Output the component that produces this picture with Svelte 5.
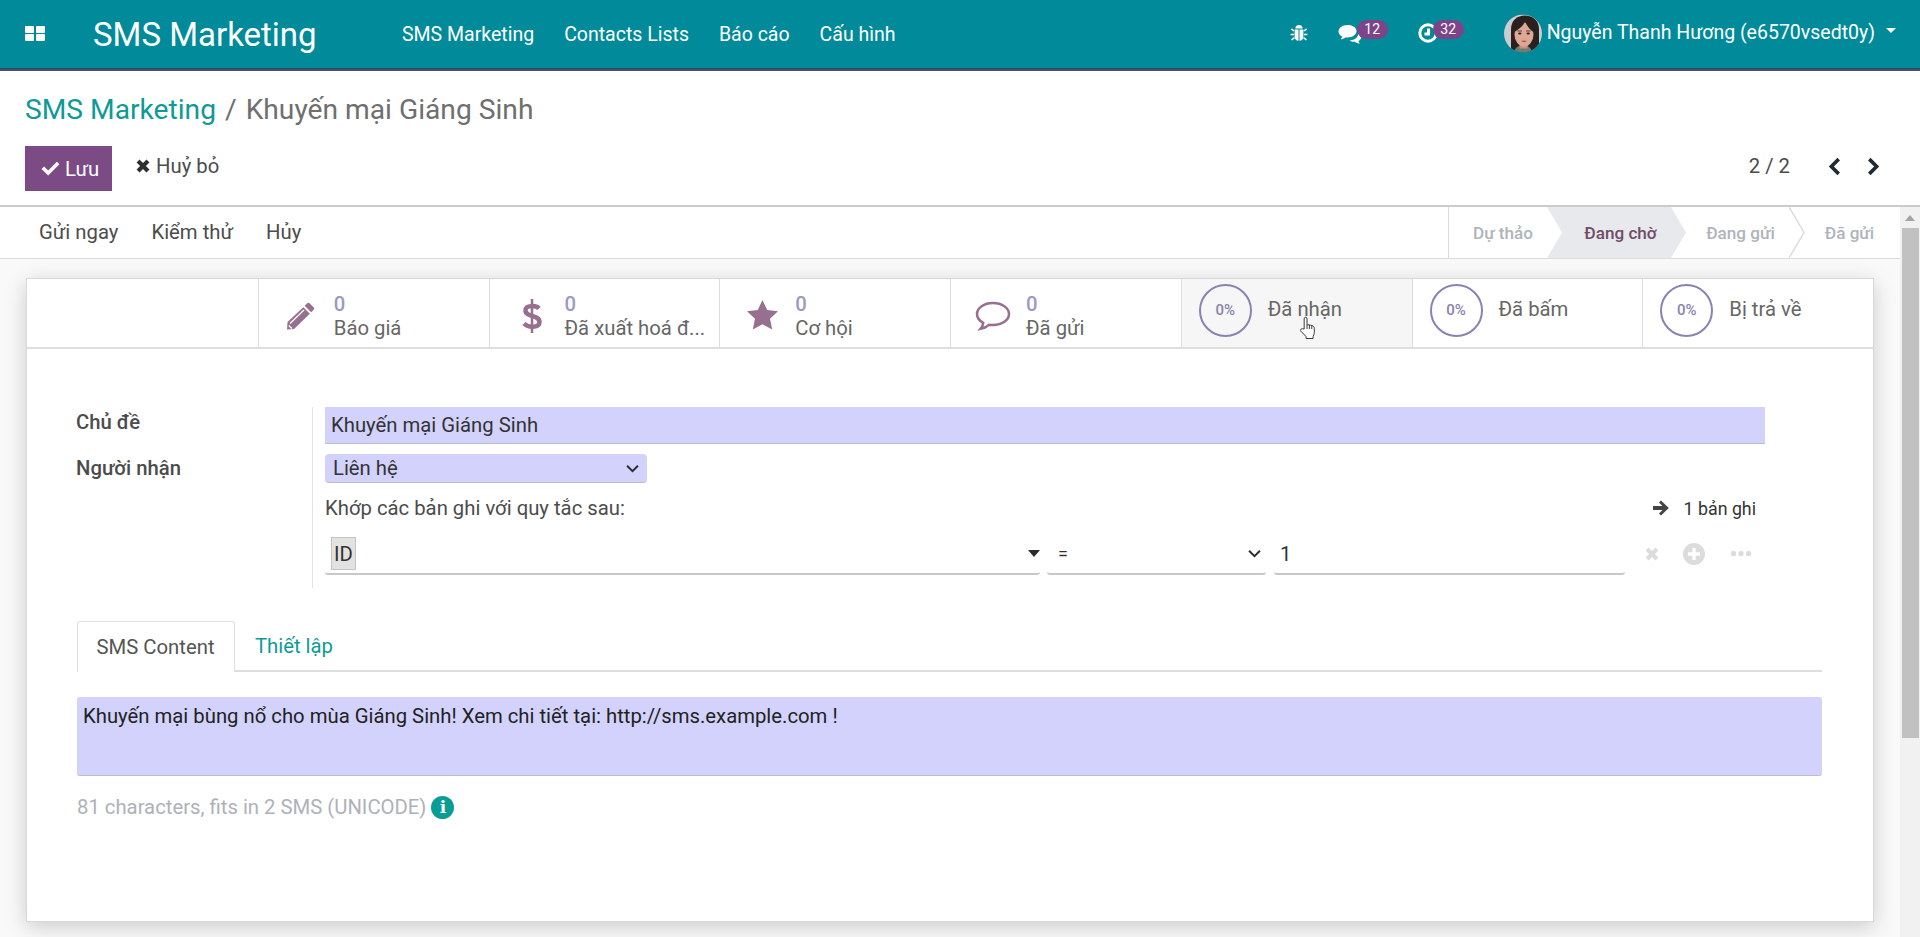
<script>
	const navLinks = ['SMS Marketing', 'Contacts Lists', 'Báo cáo', 'Cấu hình']
	const actions = ['Gửi ngay', 'Kiểm thử', 'Hủy']
	const steps = [
		{ label: 'Dự thảo', width: 98, pad: 10 },
		{ label: 'Đang chờ', width: 139, pad: 8, active: true },
		{ label: 'Đang gửi', width: 119, pad: 20 },
		{ label: 'Đã gửi', width: 110, pad: 9 }
	]
	const counters = [
		{ icon: 'pencil', label: 'Báo giá' },
		{ icon: 'dollar', label: 'Đã xuất hoá đ...' },
		{ icon: 'star', label: 'Cơ hội' },
		{ icon: 'comment', label: 'Đã gửi' }
	]
	const rates = [{ label: 'Đã nhận', hover: true }, { label: 'Đã bấm' }, { label: 'Bị trả về' }]
</script>

<div class="page">
	<header class="navbar">
		<svg class="apps" viewBox="0 0 20 15" aria-hidden="true">
			<rect x="0" y="0" width="9" height="7" rx="1" />
			<rect x="11" y="0" width="9" height="7" rx="1" />
			<rect x="0" y="8" width="9" height="7" rx="1" />
			<rect x="11" y="8" width="9" height="7" rx="1" />
		</svg>
		<span class="brand">SMS Marketing</span>
		<nav class="menu">
			{#each navLinks as link}
				<span>{link}</span>
			{/each}
		</nav>
		<div class="systray">
			<svg class="bug" viewBox="0 0 18 18" aria-hidden="true">
				<path d="M5.4 4.6a3.6 3.6 0 0 1 7.2 0z" />
				<path d="M4.6 5.6h3.9v11.2C6 16.6 4.6 15 4.6 12.5zM9.5 5.6h3.9v6.9c0 2.5-1.4 4.1-3.9 4.3z" />
				<path class="legs" d="M4 7 1.4 4.8M14 7l2.6-2.2M4 10.5H.6M14 10.5h3.4M4.4 13.6 1.6 16M13.6 13.6l2.8 2.4" />
			</svg>
			<span class="tray-item tray-chat">
				<svg class="chat" viewBox="0 0 24 20" aria-hidden="true">
					<path d="M9.5 1C4.5 1 .5 3.900.5 7.500c0 2.200 1.500 4.100 3.800 5.300-.3 1-.9 1.800-1.700 2.500 1.800-.2 3.400-.9 4.700-1.900.7.100 1.400.2 2.200.2 5 0 9-2.900 9-6.500S14.500 1 9.500 1z" />
					<path d="M20.400 9.500c.1 3.700-3.900 6.700-9 7 1.500 1 3.500 1.400 5.400 1.200 1.300 1 3 1.700 5.200 1.900-.8-.7-1.300-1.500-1.600-2.400 1.800-1 2.900-2.500 2.900-4.100 0-1.500-1.100-2.900-2.900-3.600z" />
				</svg>
				<span class="badge">12</span>
			</span>
			<span class="tray-item tray-clock">
				<svg class="clock" viewBox="0 0 20 20" aria-hidden="true">
					<circle cx="10" cy="10" r="8.200" />
					<path d="M10.500 5.500v5.500H6.500" />
				</svg>
				<span class="badge">32</span>
			</span>
			<svg class="avatar" viewBox="0 0 38 38" aria-hidden="true">
				<clipPath id="avatar-clip"><circle cx="19" cy="19" r="19" /></clipPath>
				<g clip-path="url(#avatar-clip)">
					<rect width="38" height="38" fill="#c8cdd2" />
					<path d="M7 38V15C7 6 13 1 21 1s14 5 14 14v23z" fill="#2a211f" />
					<path d="M10 38c1-6 5-7 9-7s8 1 9 7z" fill="#6d7d78" />
					<path d="M15.500 27h8v7h-8z" fill="#c8917c" />
					<ellipse cx="20" cy="20" rx="9.500" ry="12" fill="#dda996" />
					<path d="M10 18C14 15 19 12 21 7c2 5 6 9 9 11l1-7-7-6h-8l-6 6z" fill="#2a211f" />
					<ellipse cx="15.800" cy="19" rx="1.700" ry=".9" fill="#2a1c1a" />
					<ellipse cx="24.200" cy="19" rx="1.700" ry=".9" fill="#2a1c1a" />
					<path d="M13.500 16.500h4.500M22 16.500h4.500" stroke="#3a2a26" stroke-width=".8" />
					<path d="M17 26.600c2-.8 4-.8 6 0-2 1.400-4 1.400-6 0z" fill="#b4524e" />
				</g>
			</svg>
			<span class="user">Nguyễn Thanh Hương (e6570vsedt0y)</span>
			<span class="caret"></span>
		</div>
	</header>

	<section class="control-panel">
		<h1 class="breadcrumb">
			<span class="crumb-link">SMS Marketing</span>
			<span class="crumb-sep">/</span>
			<span>Khuyến mại Giáng Sinh</span>
		</h1>
		<div class="cp-row">
			<button class="save">
				<svg viewBox="0 0 18 14" aria-hidden="true"><path d="M.5 7.500 3 5l3.800 3.800L15 .5l2.500 2.500L6.800 13.700z" /></svg>
				Lưu
			</button>
			<button class="discard">
				<svg viewBox="0 0 12 12" aria-hidden="true"><path d="M3 .5 6 3.500 9 .5 11.500 3 8.500 6l3 3L9 11.500l-3-3-3 3L.5 9l3-3-3-3z" /></svg>
				Huỷ bỏ
			</button>
			<div class="pager">
				<span>2 / 2</span>
				<svg class="pager-prev" viewBox="0 0 12 18" aria-hidden="true"><path d="M10 2 3 9l7 7" /></svg>
				<svg class="pager-next" viewBox="0 0 12 18" aria-hidden="true"><path d="M2 2l7 7-7 7" /></svg>
			</div>
		</div>
	</section>

	<div class="workspace">
		<main class="content">
			<div class="statusbar">
				<div class="actions">
					{#each actions as action}
						<span>{action}</span>
					{/each}
				</div>
				<div class="steps">
					{#each steps as step, i}
						<div class="step" class:active={step.active} style="width: {step.width}px; padding-left: {step.pad}px">
							<span>{step.label}</span>
							{#if i === steps.length - 1}
								<svg class="chevron" viewBox="0 0 16 52" preserveAspectRatio="none" aria-hidden="true"><path d="M0 0 15 26 0 52" /></svg>
							{/if}
						</div>
					{/each}
				</div>
			</div>

			<div class="sheet">
				<div class="button-box">
					<div class="stat stat-empty"></div>
					{#each counters as c}
						<div class="stat">
							<span class="stat-icon">
								{#if c.icon === 'pencil'}
									<svg class="i-pencil" viewBox="0 0 29 29" aria-hidden="true">
										<path d="M21 2.500a2 2 0 0 1 2.800 0l3.700 3.700a2 2 0 0 1 0 2.800l-2.300 2.300-6.500-6.500z" />
										<path d="M17.300 6.200l6.500 6.500L8 28 1 28.500 1.500 21z" />
										<path class="cut" d="M4 22.500 18 9M2.800 24.500l3 3" />
									</svg>
								{:else if c.icon === 'dollar'}
									<svg class="i-dollar" viewBox="0 0 22 36" aria-hidden="true">
										<path class="stroke" d="M18 10.500C15.500 7.500 4.500 6.500 4.500 12.500 4.500 19.500 18.500 16.500 18.500 24c0 6-11 6-15.500 1.500" />
										<path class="stroke thin" d="M11 1v34" />
									</svg>
								{:else if c.icon === 'star'}
									<svg class="i-star" viewBox="0 0 32 32" aria-hidden="true"><path d="M16 1l4.700 10 10.800 1.300-8 7.400 2.200 10.800L16 25.200 6.300 30.500l2.200-10.800-8-7.400L11.300 11z" /></svg>
								{:else}
									<svg class="i-comment" viewBox="0 0 36 30" aria-hidden="true"><path class="stroke thin" d="M18 2C9 2 2 6.800 2 13c0 3.600 2.400 6.800 6.200 8.800-.3 2.400-1.200 4.300-2.700 6 3.400-.6 6.300-2 8.500-4 1.300.2 2.600.3 4 .3 9 0 16-5 16-11.100S27 2 18 2z" /></svg>
								{/if}
							</span>
							<span class="stat-text">
								<b>0</b>
								<span>{c.label}</span>
							</span>
						</div>
					{/each}
					{#each rates as r}
						<div class="stat rate" class:hover={r.hover}>
							<span class="ring">0%</span>
							<span class="rate-label">{r.label}</span>
							{#if r.hover}
								<svg class="hand" viewBox="0 0 20 24" preserveAspectRatio="none" aria-hidden="true">
									<path d="M6.500 13V2.800a1.500 1.500 0 0 1 3 0V9l1.200-.3 1.300.2 1.200.3 1.300.3c1.700.4 2.700 1.400 2.700 3.200v3.600c0 1.600-.5 2.800-1.300 4.200V22.500H8.500v-2L3.300 15.500c-1.600-1.600.5-3.800 2-2.500z" />
									<path d="M9.500 9v4M12 9v4M14.500 9.500V13" />
								</svg>
							{/if}
						</div>
					{/each}
				</div>

				<div class="form">
					<div class="group">
						<div class="labels">
							<span class="field-label">Chủ đề</span>
							<span class="field-label">Người nhận</span>
						</div>
						<div class="group-body">
							<div class="input-line">Khuyến mại Giáng Sinh</div>
							<div class="select-short">
								<span>Liên hệ</span>
								<svg class="select-arrow" viewBox="0 0 12 8" aria-hidden="true"><path d="M1 1.500 6 6.500l5-5" /></svg>
							</div>
							<div class="domain-head">
								<span>Khớp các bản ghi với quy tắc sau:</span>
								<span class="records">
									<svg viewBox="0 0 18 18" aria-hidden="true"><path d="M9 1.500 16.800 9 9 16.500 7 14.500 10.500 11H1V7h9.500L7 3.500z" /></svg>
									1 bản ghi
								</span>
							</div>
							<div class="domain-leaf">
								<div class="leaf-field leaf-path">
									<span class="chip">ID</span>
									<span class="tri"></span>
								</div>
								<div class="leaf-field leaf-op">
									<span class="op">=</span>
									<svg class="select-arrow" viewBox="0 0 12 8" aria-hidden="true"><path d="M1 1.500 6 6.500l5-5" /></svg>
								</div>
								<div class="leaf-field leaf-value">1</div>
								<div class="leaf-tools">
									<svg class="tool-x" viewBox="0 0 12 12" aria-hidden="true"><path d="M3 .5 6 3.500 9 .5 11.500 3 8.500 6l3 3L9 11.500l-3-3-3 3L.5 9l3-3-3-3z" /></svg>
									<svg class="tool-plus" viewBox="0 0 20 20" aria-hidden="true"><path fill-rule="evenodd" d="M10 0a10 10 0 1 0 0 20 10 10 0 0 0 0-20zM8.500 4.500h3v4h4v3h-4v4h-3v-4h-4v-3h4z" /></svg>
									<svg class="tool-more" viewBox="0 0 20 6" aria-hidden="true"><rect y=".5" width="5" height="5" rx="1.500" /><rect x="7.500" y=".5" width="5" height="5" rx="1.500" /><rect x="15" y=".5" width="5" height="5" rx="1.500" /></svg>
								</div>
							</div>
						</div>
					</div>

					<div class="tabs">
						<span class="tab active">SMS Content</span>
						<span class="tab">Thiết lập</span>
					</div>
					<div class="sms-body">Khuyến mại bùng nổ cho mùa Giáng Sinh! Xem chi tiết tại: http://sms.example.com !</div>
					<div class="sms-count">
						81 characters, fits in 2 SMS (UNICODE)
						<span class="info">i</span>
					</div>
				</div>
			</div>
		</main>

		<div class="scrollbar">
			<span class="scroll-up"></span>
			<span class="scroll-thumb"></span>
		</div>
	</div>
</div>

<style>
	:global(body) {
		margin: 0;
		background: #f9f9f9;
		font-family: Roboto, 'Noto Sans', sans-serif;
		overflow: hidden;
	}

	.page {
		height: 937px;
		display: flex;
		flex-direction: column;
		overflow: hidden;
		color: #4c4c4c;
		font-size: 20.3px;
	}

	.navbar {
		height: 69px;
		flex: none;
		box-sizing: content-box;
		display: flex;
		align-items: center;
		background: #008a9a;
		color: #fff;
		font-size: 19.5px;
		border-bottom: 2px solid #5a4765;
		box-shadow: inset 0 -1px 0 #0b5560;
	}

	.apps {
		width: 20px;
		height: 15px;
		margin-left: 25px;
		margin-top: -3px;
		fill: #fff;
	}

	.brand {
		font-size: 33px;
		margin-left: 48px;
		width: 223px;
		white-space: nowrap;
	}

	.menu {
		display: flex;
		gap: 30px;
		margin-left: 86px;
	}

	.systray {
		margin-left: auto;
		display: flex;
		align-items: center;
		margin-top: -5px;
	}

	.bug {
		width: 18px;
		height: 18px;
		fill: #fff;
		margin-top: 2px;
	}

	.legs {
		fill: none;
		stroke: #fff;
		stroke-width: 1.6;
	}

	.tray-item {
		display: flex;
		align-items: flex-start;
	}

	.tray-chat {
		margin-left: 30px;
	}

	.chat {
		width: 24px;
		height: 20px;
		fill: #fff;
		margin-top: 3px;
	}

	.tray-clock {
		margin-left: 30px;
	}

	.clock {
		width: 20px;
		height: 20px;
		margin-top: 2px;
		fill: none;
		stroke: #fff;
		stroke-width: 3;
	}

	.badge {
		width: 31px;
		height: 19px;
		margin-left: -5px;
		margin-top: -1px;
		border-radius: 10px;
		background: #7e4489;
		font-size: 14px;
		line-height: 19px;
		text-align: center;
	}

	.avatar {
		width: 38px;
		height: 39px;
		margin-left: 40px;
		margin-top: 2px;
	}

	.user {
		margin-left: 5px;
		white-space: nowrap;
	}

	.caret {
		width: 0;
		height: 0;
		margin: -4px 24px 0 11px;
		border-left: 5.5px solid transparent;
		border-right: 5.5px solid transparent;
		border-top: 5.5px solid #fff;
	}

	.control-panel {
		flex: none;
		height: 136px;
		padding: 20px 25px 0;
		box-sizing: border-box;
		background: #fff;
		border-bottom: 2px solid #cbcbcb;
	}

	.breadcrumb {
		margin: 0;
		height: 38px;
		line-height: 38px;
		font-size: 28.2px;
		font-weight: 400;
		color: #6f6f6f;
		display: flex;
		gap: 9px;
		white-space: nowrap;
	}

	.crumb-link {
		color: #0e9a96;
	}

	.cp-row {
		display: flex;
		align-items: center;
		margin-top: 17px;
		height: 45px;
	}

	button {
		font: inherit;
		border: 0;
		cursor: pointer;
	}

	.save {
		width: 87px;
		height: 45px;
		padding: 0 0 0 16px;
		display: flex;
		align-items: center;
		gap: 5px;
		background: #7c4a85;
		color: #fff;
	}

	.save svg {
		width: 19px;
		height: 15px;
		fill: #fff;
	}

	.discard {
		margin-left: 24px;
		padding: 0;
		background: none;
		color: #4c4c4c;
		display: flex;
		align-items: center;
		gap: 6px;
		margin-top: -5px;
	}

	.discard svg {
		width: 14px;
		height: 14px;
		fill: #2f2f2f;
	}

	.pager {
		margin-left: auto;
		display: flex;
		align-items: center;
		margin-right: 15px;
		margin-top: -5px;
	}

	.pager svg {
		width: 13px;
		height: 19px;
		fill: none;
		stroke: #1f2a33;
		stroke-width: 3.400;
	}

	.pager-prev {
		margin-left: 38px;
	}

	.pager-next {
		margin-left: 26px;
	}

	.workspace {
		flex: 1;
		display: flex;
		min-height: 0;
	}

	.content {
		flex: 1;
		min-width: 0;
		background: #f9f9f9;
	}

	.statusbar {
		height: 51px;
		box-sizing: content-box;
		display: flex;
		justify-content: space-between;
		background: #fff;
		border-bottom: 1.500px solid #dcdcdc;
	}

	.actions {
		display: flex;
		align-items: center;
		gap: 33px;
		padding: 0 0 2px 39px;
	}

	.steps {
		display: flex;
		border-left: 1.500px solid #dcdcdc;
	}

	.step {
		position: relative;
		box-sizing: border-box;
		display: flex;
		align-items: center;
		justify-content: center;
		font-weight: 500;
		font-size: 17.100px;
		color: #aeb4bc;
	}

	.step.active {
		color: #714b67;
		background: #e7e9ed;
		clip-path: polygon(0 0, calc(100% - 15px) 0, 100% 50%, calc(100% - 15px) 100%, 0 100%, 15px 50%);
		margin-right: -15px;
	}

	.chevron {
		position: absolute;
		left: -1px;
		top: 0;
		width: 16px;
		height: 100%;
		fill: none;
		stroke: #dcdcdc;
		stroke-width: 1.500;
	}

	.sheet {
		height: 644px;
		margin: 19px 26px 0;
		box-sizing: border-box;
		background: #fff;
		border: 1.500px solid #d9d9d9;
		box-shadow: 0 5px 20px rgba(0, 0, 0, 0.18);
	}

	.button-box {
		display: grid;
		grid-template-columns: repeat(8, 1fr);
		height: 68px;
		border-bottom: 2px solid #dedede;
	}

	.stat {
		position: relative;
		display: flex;
		align-items: center;
		border-left: 1.500px solid #dedede;
		min-width: 0;
	}

	.stat-empty {
		border-left: 0;
	}

	.stat-icon {
		width: 75px;
		flex: none;
		display: flex;
		justify-content: center;
		padding-left: 9px;
		box-sizing: border-box;
	}

	.stat-icon svg {
		fill: #976f8f;
	}

	.i-pencil {
		width: 29px;
		height: 29px;
		margin-top: 5px;
	}

	.i-dollar {
		width: 22px;
		height: 36px;
		margin-top: 5px;
	}

	.i-star {
		width: 33px;
		height: 32px;
		margin-top: 3px;
	}

	.i-comment {
		width: 36px;
		height: 30px;
		margin-top: 6px;
	}

	.stat-icon .stroke {
		fill: none;
		stroke: #976f8f;
		stroke-width: 4.500;
	}

	.stat-icon .thin {
		stroke-width: 2.500;
	}

	.stat-icon .cut {
		fill: none;
		stroke: #fff;
		stroke-width: 1.300;
	}

	.stat-text {
		display: flex;
		flex-direction: column;
		line-height: 24px;
		margin-top: 5px;
		white-space: nowrap;
		color: #666;
	}

	.stat-text b {
		font-weight: 500;
		color: #9a9ac4;
	}

	.rate {
		padding-left: 17px;
	}

	.rate.hover {
		background: #f6f6f6;
	}

	.ring {
		width: 53px;
		height: 53px;
		box-sizing: border-box;
		border: 2px solid #8a82b0;
		border-radius: 50%;
		display: flex;
		align-items: center;
		justify-content: center;
		font-size: 15px;
		font-weight: 500;
		color: #8a82b0;
		margin-top: -6px;
	}

	.rate-label {
		margin-left: 16px;
		margin-top: -9px;
		color: #666;
	}

	.hand {
		position: absolute;
		left: 116px;
		top: 37px;
		width: 19px;
		height: 24px;
		fill: #fff;
		stroke: #333;
		stroke-width: 1;
	}

	.form {
		padding: 58px 51px 0 50px;
	}

	.group {
		display: grid;
		grid-template-columns: 235px 1453px;
	}

	.labels {
		display: flex;
		flex-direction: column;
		gap: 16px;
		margin-left: -1px;
	}

	.field-label {
		font-weight: 500;
		line-height: 30px;
	}

	.group-body {
		border-left: 1px solid #e2e2e2;
		padding: 0 0 13px 12px;
	}

	.input-line {
		height: 37px;
		box-sizing: border-box;
		padding: 3px 6px 0;
		line-height: 30px;
		color: #333;
		background: #d3d2fd;
		border-bottom: 1.500px solid #bcbccc;
	}

	.select-short {
		width: 322px;
		height: 29px;
		margin-top: 10px;
		box-sizing: border-box;
		padding: 0 8px;
		display: flex;
		align-items: center;
		justify-content: space-between;
		color: #333;
		background: #d3d2fd;
		border-radius: 4px;
		border-bottom: 1.500px solid #bcbccc;
	}

	.select-arrow {
		width: 13px;
		height: 9px;
		fill: none;
		stroke: #2b2b2b;
		stroke-width: 1.800;
	}

	.domain-head {
		display: flex;
		justify-content: space-between;
		align-items: center;
		height: 30px;
		margin-top: 10px;
		width: 1431px;
	}

	.records {
		display: flex;
		align-items: center;
		gap: 14px;
		font-size: 17.800px;
		color: #333;
	}

	.records svg {
		width: 18px;
		height: 18px;
		fill: #444;
	}

	.domain-leaf {
		display: flex;
		height: 41px;
		margin-top: 11px;
		align-items: stretch;
	}

	.leaf-field {
		display: flex;
		align-items: center;
		box-sizing: border-box;
		border-bottom: 2px solid #c8c8c8;
		border-radius: 0 0 3px 3px;
		color: #333;
	}

	.leaf-path {
		width: 715px;
		justify-content: space-between;
		padding: 0 0 0 6px;
	}

	.chip {
		width: 25px;
		height: 33px;
		box-sizing: border-box;
		display: flex;
		align-items: center;
		justify-content: center;
		background: #e2e2e0;
		border: 1px solid #c4c4c4;
		color: #333;
	}

	.tri {
		width: 0;
		height: 0;
		border-left: 6.500px solid transparent;
		border-right: 6.500px solid transparent;
		border-top: 7px solid #2b2b2b;
	}

	.leaf-op {
		width: 219px;
		margin-left: 7px;
		padding: 0 5px 0 11px;
		justify-content: space-between;
	}

	.op {
		font-size: 18px;
	}

	.leaf-value {
		width: 351px;
		margin-left: 8px;
		padding-left: 6px;
	}

	.leaf-tools {
		display: flex;
		align-items: center;
		margin-left: 20px;
		padding-bottom: 2px;
	}

	.leaf-tools svg {
		fill: #dcdcdc;
	}

	.tool-x {
		width: 14px;
		height: 14px;
	}

	.tool-plus {
		width: 22px;
		height: 22px;
		margin-left: 24px;
	}

	.tool-more {
		width: 20px;
		height: 7px;
		margin-left: 26px;
	}

	.tabs {
		display: flex;
		margin-top: 33px;
		height: 51px;
		box-sizing: border-box;
		border-bottom: 2px solid #dedede;
	}

	.tab {
		height: 51px;
		box-sizing: border-box;
		padding: 0 20px;
		line-height: 51px;
		color: #0e9a96;
		white-space: nowrap;
	}

	.tab.active {
		color: #555;
		background: #fff;
		border: 1.500px solid #dedede;
		border-bottom: 0;
		border-radius: 3px 3px 0 0;
		padding: 0 18.500px;
		width: 158px;
	}

	.sms-body {
		height: 79px;
		margin-top: 25px;
		box-sizing: border-box;
		padding: 6px 6px 0;
		line-height: 27px;
		color: #222;
		background: #d3d2fd;
		border-radius: 3px;
		border-bottom: 1.500px solid #bcbccc;
	}

	.sms-count {
		display: flex;
		align-items: center;
		gap: 5px;
		margin-top: 19px;
		height: 24px;
		color: #adb2b8;
		white-space: nowrap;
	}

	.info {
		width: 23px;
		height: 23px;
		border-radius: 50%;
		background: #0a9d96;
		color: #fff;
		font-family: 'DejaVu Serif', serif;
		font-weight: 700;
		font-size: 17px;
		line-height: 23px;
		text-align: center;
	}

	.scrollbar {
		width: 20px;
		flex: none;
		background: #f1f1f1;
		display: flex;
		flex-direction: column;
		align-items: center;
	}

	.scroll-up {
		width: 0;
		height: 0;
		margin-top: 8px;
		border-left: 5px solid transparent;
		border-right: 5px solid transparent;
		border-bottom: 6px solid #a5a5a5;
	}

	.scroll-thumb {
		width: 17px;
		height: 510px;
		margin-top: 7px;
		background: #c1c1c1;
	}
</style>
